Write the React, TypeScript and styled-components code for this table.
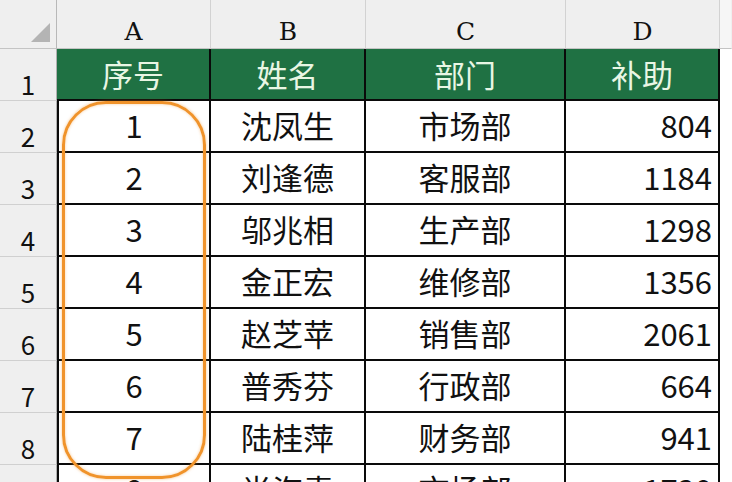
import React from "react";
import styled, { createGlobalStyle } from "styled-components";

const Global = createGlobalStyle`
  html, body { margin: 0; padding: 0; background: #ffffff; }
  body { overflow: hidden; }
`;

const Frame = styled.div`
  position: relative;
  width: 732px;
  height: 482px;
  overflow: hidden;
  background: #ffffff;
`;

const Sheet = styled.div`
  display: grid;
  grid-template-columns: 57px 154px 155px 200px 154px 1fr;
  grid-template-rows: 49px 52px repeat(8, 52px);
  font-family: "Noto Sans CJK SC", "Noto Sans", sans-serif;
`;

const Corner = styled.div`
  background: #efefef;
  border-right: 1px solid #b8b8b8;
  border-bottom: 1px solid #c4c4c4;
  box-sizing: border-box;
  display: flex;
  align-items: flex-end;
  justify-content: flex-end;
  padding: 0 6px 6px 0;
`;

const ColHead = styled.div<{ $last?: boolean }>`
  background: ${(p) => (p.$last ? "#f6f6f6" : "#efefef")};
  border-right: 1px solid ${(p) => (p.$last ? "#efefef" : "#d2d2d2")};
  border-bottom: 1px solid #c4c4c4;
  box-sizing: border-box;
  display: flex;
  align-items: flex-end;
  justify-content: center;
  padding-bottom: 2px;
  font-family: "DejaVu Serif", "Liberation Serif", serif;
  font-size: 25px;
  color: #111;
`;

const RowHead = styled.div`
  background: #efefef;
  border-right: 1px solid #b0b0b0;
  border-bottom: 1px solid #d0d0d0;
  box-sizing: border-box;
  display: flex;
  align-items: flex-end;
  justify-content: center;
  padding-bottom: 1px;
  font-size: 26px;
  line-height: 1.2;
  color: #111;
  overflow: hidden;
`;

const TitleCell = styled.div`
  background: #1f7143;
  border-right: 2px solid #0a0a0a;
  border-bottom: 2px solid #0a0a0a;
  box-sizing: border-box;
  display: flex;
  align-items: center;
  justify-content: center;
  color: #e9f6e4;
  font-size: 31px;
  padding-bottom: 2px;
`;

const Cell = styled.div<{ $align?: "center" | "right"; $first?: boolean }>`
  background: #ffffff;
  border-right: 2px solid #0a0a0a;
  border-bottom: 2px solid #0a0a0a;
  border-left: ${(p) => (p.$first ? "2px solid #0a0a0a" : "none")};
  box-sizing: border-box;
  display: flex;
  align-items: center;
  justify-content: ${(p) => (p.$align === "right" ? "flex-end" : "center")};
  padding-right: ${(p) => (p.$align === "right" ? "6px" : "0")};
  padding-bottom: 3px;
  font-size: 31px;
  color: #111;
  white-space: nowrap;
`;

const Spare = styled.div`
  background: #ffffff;
`;

const Highlight = styled.div`
  position: absolute;
  left: 62px;
  top: 101px;
  width: 144px;
  height: 378px;
  border: 3px solid #f0932b;
  border-radius: 44px;
  box-sizing: border-box;
  box-shadow: 0 0 3px rgba(240, 147, 43, 0.55), inset 0 0 3px rgba(240, 147, 43, 0.45);
  pointer-events: none;
`;

const rows: [string, string, string, string][] = [
  ["1", "沈凤生", "市场部", "804"],
  ["2", "刘逢德", "客服部", "1184"],
  ["3", "邬兆相", "生产部", "1298"],
  ["4", "金正宏", "维修部", "1356"],
  ["5", "赵芝苹", "销售部", "2061"],
  ["6", "普秀芬", "行政部", "664"],
  ["7", "陆桂萍", "财务部", "941"],
  ["8", "肖海青", "市场部", "1730"],
];

export default function App() {
  return (
    <Frame>
      <Global />
      <Sheet>
        <Corner>
          <svg width="19" height="19" viewBox="0 0 19 19">
            <polygon points="19,0 19,19 0,19" fill="#b4b4b4" />
          </svg>
        </Corner>
        {["A", "B", "C", "D"].map((c) => (
          <ColHead key={c}>{c}</ColHead>
        ))}
        <ColHead $last />

        <RowHead>1</RowHead>
        <TitleCell>序号</TitleCell>
        <TitleCell>姓名</TitleCell>
        <TitleCell>部门</TitleCell>
        <TitleCell>补助</TitleCell>
        <Spare />

        {rows.map((r, i) => (
          <React.Fragment key={i}>
            <RowHead>{i + 2}</RowHead>
            <Cell $first>{r[0]}</Cell>
            <Cell>{r[1]}</Cell>
            <Cell>{r[2]}</Cell>
            <Cell $align="right">{r[3]}</Cell>
            <Spare />
          </React.Fragment>
        ))}
      </Sheet>
      <Highlight />
    </Frame>
  );
}
